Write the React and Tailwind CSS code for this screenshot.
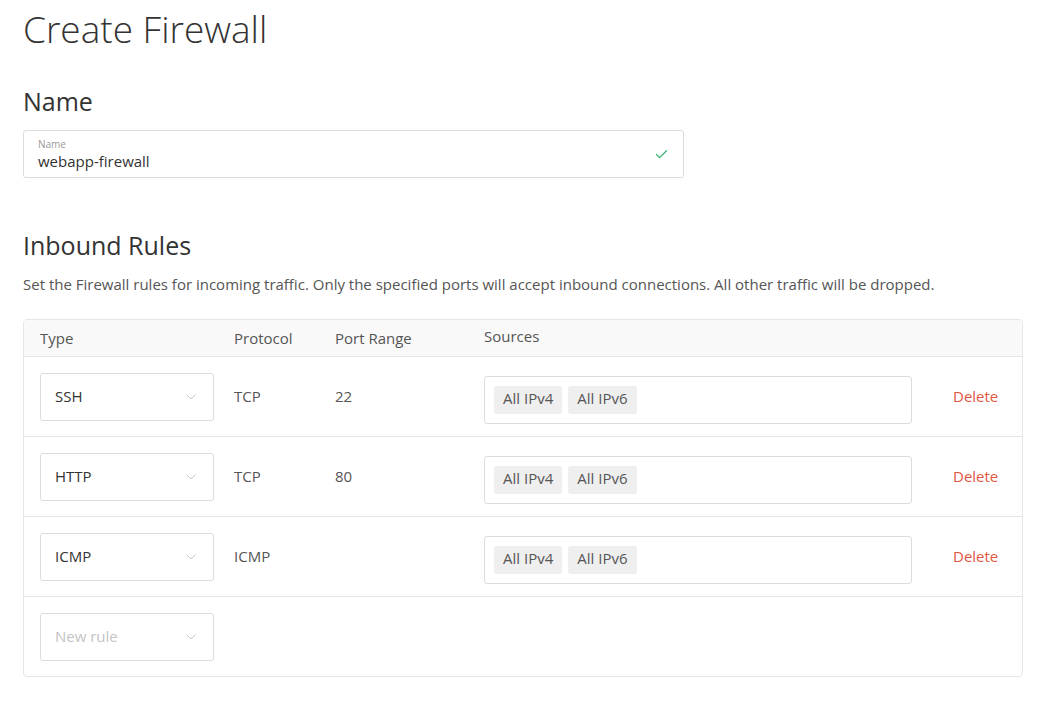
import { ChevronDown, Check } from 'lucide-react'

const RULES = [
  { type: 'SSH', protocol: 'TCP', port: '22' },
  { type: 'HTTP', protocol: 'TCP', port: '80' },
  { type: 'ICMP', protocol: 'ICMP', port: '' },
]

function TypeSelect({ value, placeholder }) {
  return (
    <div className="w-[174px] h-[48px] border border-[#dcdcdc] rounded-[3px] bg-white flex items-center justify-between pl-[14px] pr-[14px]">
      <span className={`text-[15px] ${value ? 'text-[#333]' : 'text-[#c4c4c4]'}`}>{value || placeholder}</span>
      <ChevronDown className="w-[16px] h-[16px] text-[#c8c8c8]" strokeWidth={1.5} />
    </div>
  )
}

function Tag({ children }) {
  return <span className="h-[28px] px-[9px] pb-[2px] bg-[#efefef] rounded-[3px] flex items-center text-[15px] text-[#555]">{children}</span>
}

export default function App() {
  return (
    <div className="min-h-[701px] bg-white px-[23px] pt-[8px] text-[#333]" style={{ fontFamily: '"Open Sans", "Noto Sans", sans-serif' }}>
      <h1 className="text-[37px] font-light leading-[42px] text-[#333]">Create Firewall</h1>

      <h2 className="mt-[36px] text-[25px] leading-[30px] text-[#333]">Name</h2>
      <div className="mt-[14px] w-[661px] h-[48px] border border-[#dcdcdc] rounded-[3px] flex items-center justify-between pl-[14px] pr-[14px]">
        <div className="flex flex-col">
          <span className="text-[10px] leading-[12px] text-[#999]">Name</span>
          <span className="text-[15px] leading-[20px] text-[#333] mt-[1px]">webapp-firewall</span>
        </div>
        <Check className="w-[15px] h-[15px] text-[#3cb878]" strokeWidth={2.2} />
      </div>

      <h2 className="mt-[52px] text-[25px] leading-[30px] text-[#333]">Inbound Rules</h2>
      <p className="mt-[14px] text-[15px] leading-[20px] text-[#555]">
        Set the Firewall rules for incoming traffic. Only the specified ports will accept inbound connections. All other traffic will be dropped.
      </p>

      <div className="mt-[25px] w-[1000px] border border-[#e6e6e6] rounded-[4px] overflow-hidden">
        <div className="h-[37px] bg-[#f9f9f9] border-b border-[#e6e6e6] flex items-center pl-[16px] text-[15px] text-[#555]">
          <span className="w-[194px]">Type</span>
          <span className="w-[101px]">Protocol</span>
          <span className="w-[149px]">Port Range</span>
          <span className="-mt-[4px]">Sources</span>
        </div>
        {RULES.map(r => (
          <div key={r.type} className="h-[80px] border-b border-[#e6e6e6] flex items-center pl-[16px] text-[15px] text-[#555]">
            <div className="w-[194px]"><TypeSelect value={r.type} /></div>
            <span className="w-[101px]">{r.protocol}</span>
            <span className="w-[149px]">{r.port}</span>
            <div className="w-[428px] h-[48px] mt-[6px] border border-[#dcdcdc] rounded-[3px] flex items-center gap-[6px] pl-[9px]">
              <Tag>All IPv4</Tag>
              <Tag>All IPv6</Tag>
            </div>
            <span className="ml-[41px] text-[#e0573f]">Delete</span>
          </div>
        ))}
        <div className="h-[79px] flex items-center pl-[16px]">
          <TypeSelect placeholder="New rule" />
        </div>
      </div>
    </div>
  )
}
